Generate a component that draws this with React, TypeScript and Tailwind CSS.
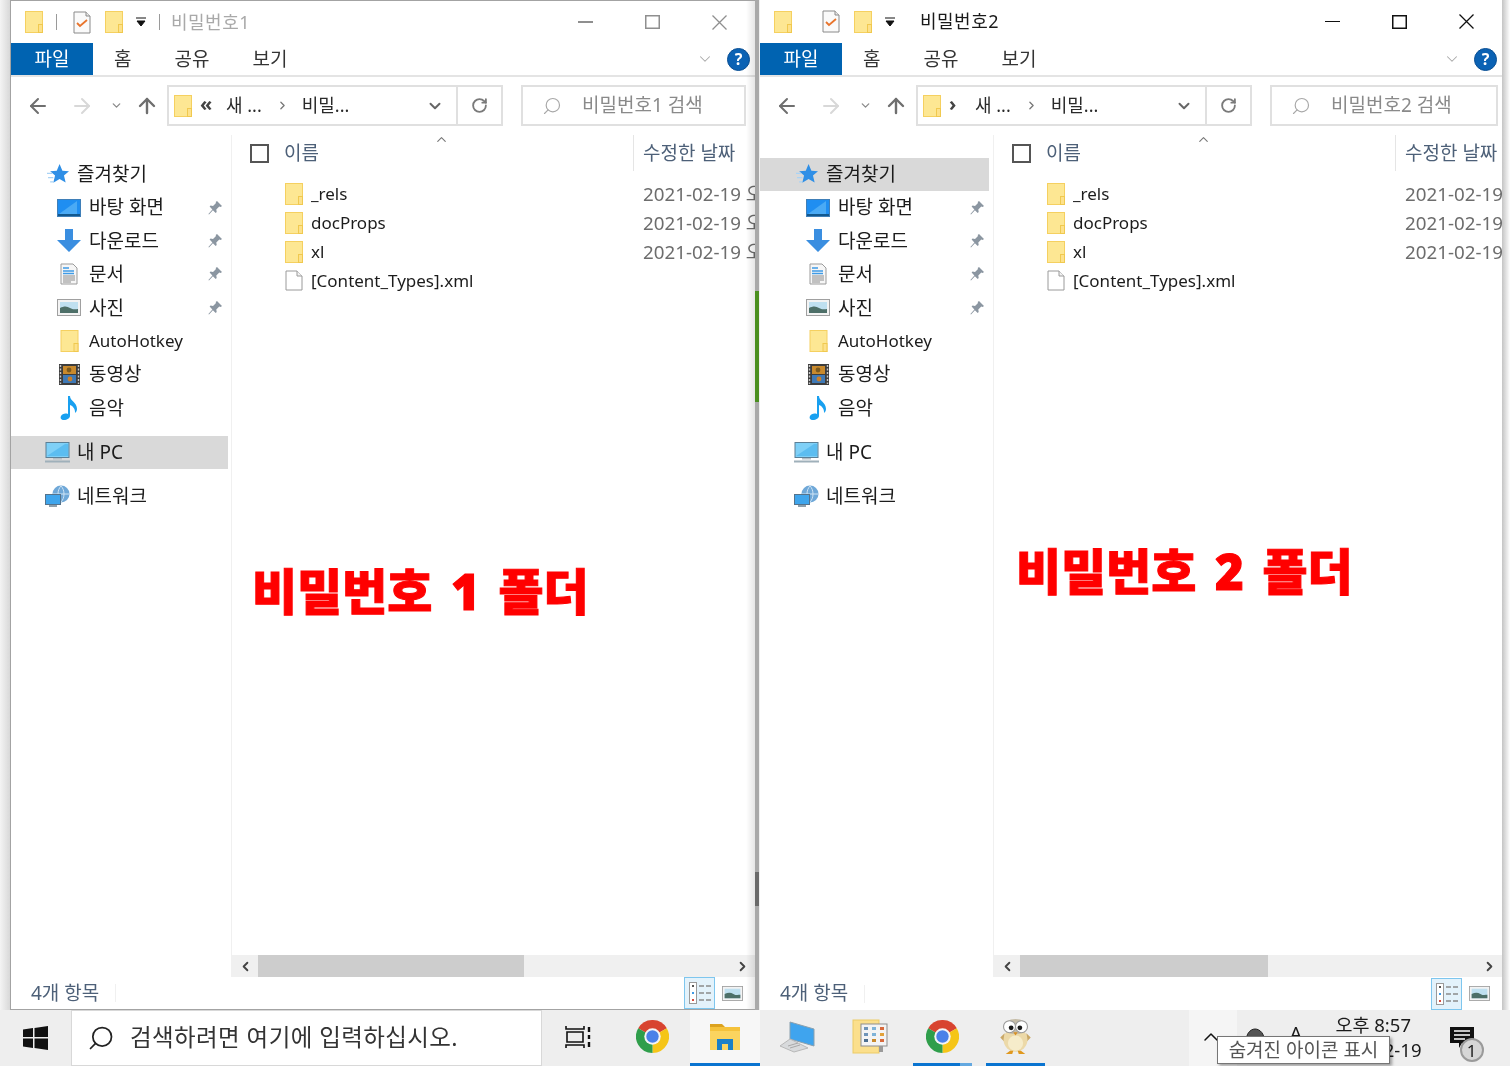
import { ArrowLeft, ArrowRight, ArrowUp, ChevronDown, ChevronLeft, ChevronRight, ChevronUp, RotateCw, Search } from "lucide-react";

function Folder({ className = "w-[18px] h-[22px]" }: { className?: string }) {
  return (
    <svg viewBox="0 0 18 22" className={`shrink-0 ${className}`}>
      <rect x="0.5" y="0.5" width="17" height="21" fill="#fde793" stroke="#f5d060" />
      <rect x="13.5" y="13.5" width="4" height="8" fill="#fde18b" stroke="#f0c94f" />
    </svg>
  );
}

function CheckDoc() {
  return (
    <svg viewBox="0 0 18 23" className="w-[18px] h-[23px] shrink-0">
      <path d="M1 1h12l4 4v17H1z" fill="#fafafa" stroke="#8a8a8a" />
      <path d="M13 1v4h4" fill="#e8e8e8" stroke="#8a8a8a" />
      <path d="M4 12l3 3 7-6" fill="none" stroke="#e8742c" strokeWidth="1.8" />
    </svg>
  );
}

function Pin() {
  return (
    <svg viewBox="0 0 16 16" className="w-[16px] h-[16px] shrink-0">
      <path d="M10 1l5 5-1.3 1-1.4-.4-3 3 .4 2.4-1 1-2.8-2.8L2 14.6 1.4 14l4-4.6L2.6 6.600l1-1 2.400.4 3-3L8.700 2z" fill="#8b96a1" />
    </svg>
  );
}

function StarIcon() {
  return (
    <svg viewBox="1 0 21 19" className="w-[22px] h-[20px] shrink-0">
      <path d="M13 0l2.700 6.300 6.300.5-4.800 4.200 1.600 6.600L13 14.200l-6 3.600 1.700-6.800-4.700-4.200 6.300-.5z" fill="#2f8fe6" />
      <path d="M1 9h5M2 13h5M4 17h3" stroke="#a9d3f5" strokeWidth="1.2" />
    </svg>
  );
}

function DesktopIcon() {
  return (
    <svg viewBox="0 0 24 18" className="w-[24px] h-[18px] shrink-0">
      <rect x="0.5" y="0.5" width="23" height="17" fill="#1f8ef1" stroke="#3f7fb8" />
      <path d="M2 15L20 2v13z" fill="#4aaaf5" />
      <rect x="1" y="15" width="22" height="2" fill="#11588f" />
    </svg>
  );
}

function DownloadIcon() {
  return (
    <svg viewBox="0 0 24 23" className="w-[24px] h-[23px] shrink-0">
      <path d="M8 0h8v11h8L12 23 0 11h8z" fill="#3a8ee0" />
    </svg>
  );
}

function DocumentIcon() {
  return (
    <svg viewBox="0 0 18 22" className="w-[18px] h-[22px] shrink-0">
      <path d="M1 1h12l4 4v16H1z" fill="#f6f6f6" stroke="#9b9b9b" />
      <path d="M3 5h6M3 8h11M3 10.500h11" stroke="#3f9be6" strokeWidth="1.4" />
      <path d="M3 13h12M3 15h12M3 17h12M3 19h8" stroke="#8c8c8c" />
    </svg>
  );
}

function PictureIcon({ className = "w-[24px] h-[17px]" }: { className?: string }) {
  return (
    <svg viewBox="0 0 24 17" className={`shrink-0 ${className}`}>
      <rect x="0.5" y="0.5" width="23" height="16" fill="#f3f3f3" stroke="#a0a0a0" />
      <rect x="3" y="3" width="18" height="11" fill="#bfe0f0" />
      <path d="M3 9c4-2 7-2 10 0s6 1 8 1v4H3z" fill="#4d6f68" />
    </svg>
  );
}

function FilmIcon() {
  return (
    <svg viewBox="0 0 21 21" className="w-[21px] h-[21px] shrink-0">
      <rect width="21" height="21" fill="#3d3d3d" />
      <path d="M1.500 1v19M19.500 1v19" stroke="#c9c9c9" strokeWidth="1.4" strokeDasharray="2 1.5" />
      <rect x="4" y="2" width="13" height="8" fill="#c98a2d" />
      <rect x="4" y="11" width="13" height="8" fill="#3f79b5" />
      <circle cx="10" cy="6" r="2.4" fill="#7c5a1e" />
      <circle cx="11" cy="15" r="2.4" fill="#c97f2a" />
    </svg>
  );
}

function NoteIcon() {
  return (
    <svg viewBox="0 0 18 24" className="w-[18px] h-[24px] shrink-0">
      <path d="M8 0h2c0 5 7 6 7 13 0 2-1 3-2 4 .4-4-2-7-5-8v11c0 2-3 4-6 4s-4-2-3-4 4-3 7-2z" fill="#19a0f0" />
    </svg>
  );
}

function PcIcon() {
  return (
    <svg viewBox="0 0 25 21" className="w-[25px] h-[21px] shrink-0">
      <rect x="1" y="0.5" width="23" height="15" fill="#7fd0f7" stroke="#5b7f96" />
      <path d="M2 14L20 2h3v12z" fill="#5cbdf0" />
      <rect x="8" y="16" width="9" height="1.5" fill="#b5bfc6" />
      <rect x="0" y="18.500" width="25" height="2" fill="#9fb0ba" />
    </svg>
  );
}

function NetworkIcon() {
  return (
    <svg viewBox="0 0 25 22" className="w-[25px] h-[22px] shrink-0">
      <circle cx="16" cy="9" r="8.500" fill="#6fa8d8" />
      <path d="M8 9h16M16 1c-4 4-4 12 0 16M16 1c4 4 4 12 0 16" stroke="#cfe4f5" fill="none" />
      <rect x="0.5" y="9.500" width="15" height="10" fill="#3fa5ec" stroke="#55738c" />
      <rect x="4" y="20" width="8" height="2" fill="#8ea0ac" />
    </svg>
  );
}

function FileIcon() {
  return (
    <svg viewBox="0 0 18 21" className="w-[18px] h-[21px] shrink-0">
      <path d="M1 1h11l5 5v14H1z" fill="#fff" stroke="#9a9a9a" />
      <path d="M12 1v5h5" fill="#f2f2f2" stroke="#9a9a9a" />
    </svg>
  );
}

function ChromeIcon() {
  return (
    <svg viewBox="0 0 32 32" className="w-[33px] h-[33px]">
      <path d="M16 16L2.140 8A16 16 0 0 1 29.860 8z" fill="#d8432f" />
      <path d="M16 16L29.860 8A16 16 0 0 1 16 32z" fill="#f5c518" />
      <path d="M16 16L16 32A16 16 0 0 1 2.140 8z" fill="#2f9e4b" />
      <circle cx="16" cy="16" r="8" fill="#f4f4f4" />
      <circle cx="16" cy="16" r="6" fill="#4a80e8" />
    </svg>
  );
}

function ExplorerIcon() {
  return (
    <svg viewBox="0 0 32 32" className="w-[32px] h-[32px]">
      <path d="M1 3h12l3 3H1z" fill="#dca21e" />
      <rect x="1" y="6" width="30" height="23" fill="#fbd45f" />
      <rect x="1" y="6" width="30" height="4" fill="#f5c23b" />
      <path d="M8 29V18h16v11h-5v-6h-6v6z" fill="#1c80c8" />
    </svg>
  );
}

function LaptopIcon() {
  return (
    <svg viewBox="0 0 36 32" className="w-[36px] h-[32px]">
      <path d="M11 1l24 7v17l-24-7z" fill="#3fa4ee" stroke="#8aa0ae" />
      <path d="M11 18L1 25l14 6 14-4-8-4z" fill="#d8dadc" stroke="#b8b8b8" />
      <path d="M9 25l10-3M11 27l10-3" stroke="#a8a8a8" />
    </svg>
  );
}

function FolderAppIcon() {
  return (
    <svg viewBox="0 0 36 36" className="w-[36px] h-[36px]">
      <rect x="1" y="1" width="26" height="33" fill="#fbdf8c" stroke="#eccb66" />
      <rect x="9" y="5" width="26" height="22" fill="#f4f4f4" stroke="#8d8d8d" />
      <g fill="#6f94b8">
        <rect x="12" y="8" width="4" height="3" />
        <rect x="12" y="14" width="4" height="3" />
        <rect x="12" y="20" width="4" height="3" fill="#4d6f8f" />
      </g>
      <g fill="#7fb3d8">
        <rect x="20" y="8" width="4" height="3" />
        <rect x="20" y="14" width="4" height="3" />
        <rect x="20" y="20" width="4" height="3" fill="#c98a2d" />
      </g>
      <g fill="#d86a3d">
        <rect x="28" y="8" width="4" height="3" />
        <rect x="28" y="14" width="4" height="3" fill="#e2a13a" />
        <rect x="28" y="20" width="4" height="3" />
      </g>
      <rect x="27" y="27" width="4" height="6" fill="#9a9a9a" />
    </svg>
  );
}

function OwlIcon() {
  return (
    <svg viewBox="0 0 30 34" className="w-[33px] h-[37px]">
      <path d="M1 18l4-4v8zM29 18l-4-4v8z" fill="#c9a765" />
      <ellipse cx="15" cy="20" rx="11" ry="11" fill="#ecd9a8" />
      <ellipse cx="15" cy="23" rx="7" ry="7" fill="#f6ecca" />
      <ellipse cx="15" cy="8" rx="11" ry="7" fill="#c4bba6" />
      <circle cx="9.500" cy="8" r="5.500" fill="#fff" stroke="#9a9a9a" />
      <circle cx="20.500" cy="8" r="5.500" fill="#fff" stroke="#9a9a9a" />
      <circle cx="11" cy="9" r="2.200" fill="#1a1a1a" />
      <circle cx="19" cy="9" r="2.200" fill="#1a1a1a" />
      <path d="M13 13h4l-2 3z" fill="#d98f22" />
      <path d="M6 33l4-3h3l-1 3zM24 33l-4-3h-3l1 3z" fill="#e0981e" />
    </svg>
  );
}

function DetailsViewIcon() {
  return (
    <svg viewBox="0 0 24 24" className="w-[24px] h-[24px]">
      <rect x="1.500" y="1.500" width="7" height="21" fill="#fff" stroke="#9a9a9a" />
      <rect x="4" y="4" width="2" height="2" fill="#555" />
      <rect x="4" y="11" width="2" height="2" fill="#3f9be6" />
      <rect x="4" y="18" width="2" height="2" fill="#d84a3d" />
      <path d="M11 5h5M18 5h5M11 12h5M18 12h5M11 19h5M18 19h5" stroke="#8c8c8c" strokeWidth="1.4" />
    </svg>
  );
}

function SidebarRow({ icon, label, labelClass = "", pinned, child, selected }: { icon: React.ReactNode; label: string; labelClass?: string; pinned?: boolean; child?: boolean; selected?: boolean }) {
  return (
    <div className={`h-[33.4px] flex items-center ${selected ? "bg-[#d9d9d9]" : ""}`}>
      <div className={`flex items-center justify-center shrink-0 ${child ? "ml-[46px] w-[24px] mr-[8px]" : "ml-[34px] w-[25px] mr-[7px]"}`}>{icon}</div>
      <span className={`whitespace-nowrap ${labelClass}`}>{label}</span>
      {pinned && (
        <div className="ml-auto">
          <Pin />
        </div>
      )}
    </div>
  );
}

function FileRow({ icon, name, date }: { icon: React.ReactNode; name: string; date?: string }) {
  return (
    <div className="h-[29px] flex items-center whitespace-nowrap">
      <div className="w-[411px] flex items-center shrink-0 pl-[53px]">
        {icon}
        <span className="ml-[8px] text-[#1c1c1c] text-[17px]">{name}</span>
      </div>
      {date && <span className="text-[#6d6d6d] text-[18.750px] pt-[2px]">{date}</span>}
    </div>
  );
}

type WindowProps = {
  title: string;
  active?: boolean;
  widthClass: string;
  titleHeightClass: string;
  statusHeightClass: string;
  sidebarClass: string;
  highlightClass: string;
  searchClass: string;
  thumbClass: string;
  selected: "fav" | "pc";
  crumb: string;
  search: string;
  note: string;
  noteClass: string;
  borderClass: string;
};

function ExplorerWindow(p: WindowProps) {
  const controlColor = p.active ? "#111111" : "#8f8f8f";
  return (
    <div className={`relative flex flex-col h-[1010px] shrink-0 bg-white overflow-hidden ${p.widthClass} ${p.borderClass}`}>
      {/* Title bar */}
      <div className={`flex items-center pl-[14px] pr-[2px] shrink-0 ${p.titleHeightClass}`}>
        <Folder />
        <div className={`ml-[13px] w-px h-[16px] ${p.active ? "" : "bg-[#9a9a9a]"}`} />
        <div className="ml-[16px]"><CheckDoc /></div>
        <div className="ml-[14px]"><Folder /></div>
        <svg viewBox="0 0 10 10" className="ml-[13px] w-[10px] h-[10px]">
          <path d="M0 1h10M1 4h8l-4 5z" stroke="#111" fill="#111" strokeWidth="1" />
        </svg>
        <div className={`ml-[13px] w-px h-[16px] ${p.active ? "" : "bg-[#9a9a9a]"}`} />
        <span className={`ml-[11px] text-[18px] tracking-[0.5px] ${p.active ? "text-[#1a1a1a]" : "text-[#a9a9a9]"}`}>{p.title}</span>
        <div className="ml-auto flex items-center">
          <div className="w-[67px] flex justify-center">
            <div className="w-[15px] h-[1.500px]" style={{ backgroundColor: controlColor }} />
          </div>
          <div className="w-[67px] flex justify-center">
            <svg viewBox="0 0 15 14" className="w-[15px] h-[14px]">
              <rect x="0.750" y="0.750" width="13.500" height="12.500" fill="none" stroke={controlColor} strokeWidth="1.500" />
            </svg>
          </div>
          <div className="w-[67px] flex justify-center">
            <svg viewBox="0 0 15 15" className="w-[15px] h-[15px]">
              <path d="M0.500 0.500l14 14M14.500 0.500l-14 14" stroke={controlColor} strokeWidth="1.300" />
            </svg>
          </div>
        </div>
      </div>

      {/* Ribbon tabs */}
      <div className="h-[34px] flex items-stretch border-b-2 border-[#e4e4e4] shrink-0 text-[#333] pr-[5px]">
        <div className="w-[82px] bg-[#0063b1] text-white flex items-center justify-center">파일</div>
        <div className="ml-[21px] flex items-center">홈</div>
        <div className="ml-[43px] flex items-center">공유</div>
        <div className="ml-[43px] flex items-center">보기</div>
        <div className="ml-auto flex items-center gap-[13px]">
          <ChevronDown size={18} color="#a8a8a8" strokeWidth={1.4} />
          <div className="w-[23px] h-[23px] rounded-full bg-[#0b62b4] text-white flex items-center justify-center text-[16px] font-bold border border-[#0a4f94]">?</div>
        </div>
      </div>

      {/* Address row */}
      <div className="h-[58px] pt-[8px] flex items-start pl-[15px] shrink-0">
        <div className="h-[41px] flex items-center shrink-0">
          <ArrowLeft size={24} color="#6f6f6f" strokeWidth={2} />
          <div className="ml-[20px]"><ArrowRight size={24} color="#d8d8d8" strokeWidth={2} /></div>
          <div className="ml-[16px]"><ChevronDown size={13} color="#8a8a8a" strokeWidth={2.4} /></div>
          <div className="ml-[12px]"><ArrowUp size={24} color="#6f6f6f" strokeWidth={2.4} /></div>
        </div>
        <div className="ml-[8px] w-[336px] h-[41px] border-2 border-[#e0e0e0] flex items-center shrink-0 text-[#2a2a2a] text-[18px]">
          <div className="ml-[5px]"><Folder /></div>
          <span className="ml-[8px] w-[26px] text-[#444] text-[20px] font-bold leading-none pb-[3px]">{p.crumb}</span>
          <span>새 ...</span>
          <div className="ml-[14px]"><ChevronRight size={13} color="#777" strokeWidth={2.4} /></div>
          <span className="ml-[13px]">비밀...</span>
          <div className="ml-auto pr-[12px] border-r-2 border-[#e0e0e0] h-full flex items-center">
            <ChevronDown size={18} color="#666" strokeWidth={2.6} />
          </div>
          <div className="w-[43px] flex justify-center"><RotateCw size={17} color="#7a7a7a" strokeWidth={2.6} /></div>
        </div>
        <div className={`ml-[18px] h-[41px] border-2 border-[#e0e0e0] flex items-center shrink-0 text-[#8a8a8a] ${p.searchClass}`}>
          <div className="ml-[19px] -scale-x-100"><Search size={20} color="#a8a8a8" strokeWidth={1.4} /></div>
          <span className="ml-[20px] whitespace-nowrap">{p.search}</span>
        </div>
      </div>

      {/* Body */}
      <div className="flex-1 flex min-h-0">
        <div className={`shrink-0 border-r border-[#f0f0f0] pt-[22.500px] text-[#1c1c1c] ${p.sidebarClass}`}>
          <div className={p.selected === "fav" ? p.highlightClass : ""}>
            <SidebarRow icon={<StarIcon />} label="즐겨찾기" selected={p.selected === "fav"} />
          </div>
          <div className="pr-[8px]">
            <SidebarRow child icon={<DesktopIcon />} label="바탕 화면" pinned />
            <SidebarRow child icon={<DownloadIcon />} label="다운로드" pinned />
            <SidebarRow child icon={<DocumentIcon />} label="문서" pinned />
            <SidebarRow child icon={<PictureIcon />} label="사진" pinned />
            <SidebarRow child icon={<Folder className="w-[19px] h-[22px]" />} label="AutoHotkey" labelClass="text-[17px]" />
            <SidebarRow child icon={<FilmIcon />} label="동영상" />
            <SidebarRow child icon={<NoteIcon />} label="음악" />
          </div>
          <div className={`mt-[11px] ${p.selected === "pc" ? p.highlightClass : ""}`}>
            <SidebarRow icon={<PcIcon />} label="내 PC" selected={p.selected === "pc"} />
          </div>
          <div className="mt-[10.500px]">
            <SidebarRow icon={<NetworkIcon />} label="네트워크" />
          </div>
        </div>

        <div className="flex-1 min-w-0 flex flex-col">
          <div className="flex-1 min-h-0 overflow-hidden">
            <div className="relative h-[36px] flex items-center whitespace-nowrap text-[#4d6078]">
              <div className="w-[401px] shrink-0 flex items-center pl-[18px] h-full">
                <div className="w-[19px] h-[19px] border-2 border-[#555] shrink-0" />
                <span className="ml-[15px]">이름</span>
              </div>
              <div className="h-full w-px bg-[#e5e5e5] shrink-0" />
              <span className="ml-[9px]">수정한 날짜</span>
              <div className="absolute left-[202px] top-[-3px]"><ChevronUp size={15} color="#777" strokeWidth={1.8} /></div>
            </div>
            <div className="pt-[8px]">
              <FileRow icon={<Folder />} name="_rels" date="2021-02-19 오후 8:50" />
              <FileRow icon={<Folder />} name="docProps" date="2021-02-19 오후 8:50" />
              <FileRow icon={<Folder />} name="xl" date="2021-02-19 오후 8:50" />
              <FileRow icon={<FileIcon />} name="[Content_Types].xml" />
            </div>
          </div>
          <div className="h-[22px] shrink-0 bg-[#f0f0f0] flex items-center">
            <div className="w-[26px] shrink-0 flex justify-center"><ChevronLeft size={15} color="#444" strokeWidth={3} /></div>
            <div className="flex-1 h-full">
              <div className={`h-full bg-[#cdcdcd] ${p.thumbClass}`} />
            </div>
            <div className="w-[25px] shrink-0 flex justify-center"><ChevronRight size={15} color="#444" strokeWidth={3} /></div>
          </div>
        </div>
      </div>

      {/* Status bar */}
      <div className={`shrink-0 flex items-center pl-[20px] text-[#4d6078] ${p.statusHeightClass}`}>
        <span>4개 항목</span>
        <div className="ml-[16px] w-px h-[18px] bg-[#f0f0f0]" />
        <div className="ml-auto flex items-center mr-[12px]">
          <div className="w-[31px] h-[32px] border border-[#7ec6ee] bg-[#e3f2fb] flex items-center justify-center"><DetailsViewIcon /></div>
          <div className="ml-[7px]"><PictureIcon className="w-[21px] h-[15px]" /></div>
        </div>
      </div>

      {/* Red note drawn over the window */}
      <div className={`absolute whitespace-nowrap text-[#ff0000] font-black text-[49px] leading-none [word-spacing:6px] [-webkit-text-stroke:1px_#ff0000] ${p.noteClass}`}>{p.note}</div>

      {/* Shadow of the neighbouring window */}
      {!p.active && <div className="absolute right-0 top-0 bottom-0 w-[9px] bg-gradient-to-r from-transparent to-black/10 pointer-events-none" />}
    </div>
  );
}

function TaskSlot({ children, widthClass = "w-[72.500px]", line, bg = "" }: { children: React.ReactNode; widthClass?: string; line?: React.ReactNode; bg?: string }) {
  return (
    <div className={`h-full flex flex-col shrink-0 ${widthClass} ${bg}`}>
      <div className="flex-1 flex items-center justify-center">{children}</div>
      <div className="h-[3px] flex justify-center">{line}</div>
    </div>
  );
}

export default function App() {
  return (
    <div className="w-[1510px] h-[1066px] overflow-hidden bg-white flex flex-col font-['Noto_Sans','Noto_Sans_CJK_KR',sans-serif] text-[19px] blur-[0.35px]">
      <div className="flex h-[1010px] shrink-0">
        <div className="w-[10px] shrink-0 bg-gradient-to-r from-[#f4f4f4] to-[#d8d8d8]" />
        <ExplorerWindow
          title="비밀번호1"
          widthClass="w-[745px]"
          titleHeightClass="h-[42px]"
          statusHeightClass="h-[32px]"
          sidebarClass="w-[221px]"
          highlightClass="w-[217px]"
          searchClass="w-[225px]"
          thumbClass="w-[266px]"
          selected="pc"
          crumb="«"
          search="비밀번호1 검색"
          note="비밀번호 1 폴더"
          noteClass="left-[241px] top-[566px]"
          borderClass="border-l border-t border-b border-[#a3a3a3]"
        />
        <div className="w-[4px] shrink-0 flex flex-col bg-[#a9a9a9]">
          <div className="h-[291px]" />
          <div className="h-[111px] bg-[#4a8f1f]" />
          <div className="h-[470px]" />
          <div className="h-[34px] bg-[#6a6a6a]" />
        </div>
        <ExplorerWindow
          active
          title="비밀번호2"
          widthClass="w-[743px]"
          titleHeightClass="h-[43px]"
          statusHeightClass="h-[33px]"
          sidebarClass="w-[234px]"
          highlightClass="w-[229px]"
          searchClass="w-[228px]"
          thumbClass="w-[248px]"
          selected="fav"
          crumb="›"
          search="비밀번호2 검색"
          note="비밀번호 2 폴더"
          noteClass="left-[256px] top-[547px]"
          borderClass="border-l border-[#f0f0f0]"
        />
        <div className="flex-1 bg-gradient-to-r from-[#c4c4c4] to-white" />
      </div>

      {/* Taskbar */}
      <div className="relative h-[56px] shrink-0 bg-[#eeeeee] flex items-stretch text-[#1a1a1a]">
        <div className="w-[71px] shrink-0 flex items-center justify-center">
          <svg viewBox="0 0 25 24" className="w-[25px] h-[24px]">
            <path d="M0 3.500l10-1.400V11H0zM11.500 1.900L25 0v11H11.500zM0 12.500h10v9.400L0 20.500zM11.500 12.500H25V24l-13.500-1.900z" fill="#111" />
          </svg>
        </div>
        <div className="w-[471px] shrink-0 bg-white border border-[#d8d8d8] flex items-center pl-[15px] text-[23.500px] tracking-[0.4px] text-[#333]">
          <div className="-scale-x-100"><Search size={28} color="#222" strokeWidth={1.5} /></div>
          <span className="ml-[15px] whitespace-nowrap">검색하려면 여기에 입력하십시오.</span>
        </div>
        <TaskSlot>
          <svg viewBox="0 0 26 24" className="w-[26px] h-[24px]">
            <path d="M1 1v3h18V1M1 23v-3h18v3M2 7h16v10H2z" fill="none" stroke="#111" strokeWidth="1.600" />
            <path d="M24 2v5M24 10v4M24 17v5" stroke="#111" strokeWidth="2.400" />
          </svg>
        </TaskSlot>
        <TaskSlot widthClass="w-[75.500px]"><ChromeIcon /></TaskSlot>
        <TaskSlot widthClass="w-[70px]" bg="bg-[#f7f7f7]" line={<div className="w-full bg-[#0a74d0]" />}><ExplorerIcon /></TaskSlot>
        <TaskSlot widthClass="w-[74px]"><LaptopIcon /></TaskSlot>
        <TaskSlot><FolderAppIcon /></TaskSlot>
        <TaskSlot line={<div className="w-[59px] flex"><div className="w-[47px] bg-[#0a74d0]" /><div className="flex-1 bg-[#63a8e0]" /></div>}><ChromeIcon /></TaskSlot>
        <TaskSlot line={<div className="w-[59px] bg-[#0a74d0]" />}><OwlIcon /></TaskSlot>

        {/* Tray */}
        <div className="ml-[137px] w-[48px] shrink-0 bg-[#f5f5f5] flex items-center justify-center pr-[4px] pb-[2px]"><ChevronUp size={24} color="#111" strokeWidth={1.5} /></div>
        <div className="w-[185px] shrink-0 flex">
          <div className="ml-[7px] mt-[17px]">
            <svg viewBox="0 0 22 16" className="w-[22px] h-[16px]">
              <path d="M3 15C1 8 6 2 11 2s10 5 9 13" fill="#555" stroke="#222" />
            </svg>
          </div>
          <div className="ml-[24px] mt-[14px] text-[20px] leading-none">A</div>
          <div className="ml-auto flex flex-col items-center pt-[2px] leading-[25px] text-[18.500px]">
            <span>오후 8:57</span>
            <span>2021-02-19</span>
          </div>
        </div>
        <div className="relative ml-[28px] mt-[17px]">
          <svg viewBox="0 0 24 22" className="w-[24px] h-[22px]">
            <path d="M0 0h24v16H12l-3 5v-5H0z" fill="#111" />
            <path d="M4 4h16M4 8h16M4 12h11" stroke="#fff" strokeWidth="1.400" />
          </svg>
          <div className="absolute left-[10px] top-[11px] w-[24px] h-[24px] rounded-full bg-[#d6d6d6] border-2 border-[#9a9a9a] flex items-center justify-center text-[17px] leading-none">1</div>
        </div>

        {/* Tooltip */}
        <div className="absolute left-[1217px] top-[26px] w-[173px] h-[28px] bg-white border border-[#767676] shadow-[2px_2px_3px_rgba(0,0,0,0.35)] flex items-center justify-center text-[#555] whitespace-nowrap text-[19px]">숨겨진 아이콘 표시</div>
      </div>
    </div>
  );
}
